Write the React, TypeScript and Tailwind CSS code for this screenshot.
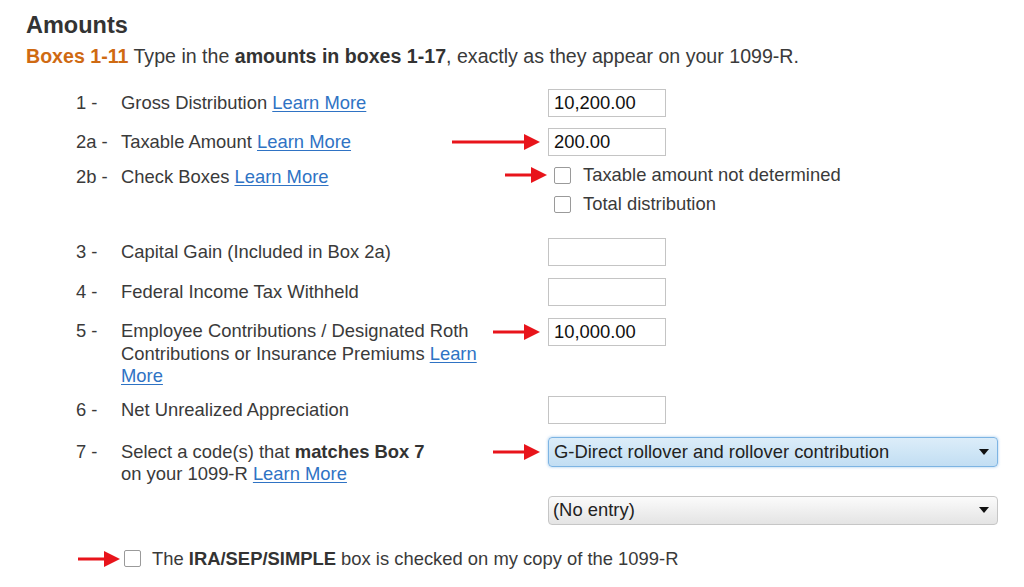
import React from 'react';

const font = { fontFamily: '"Liberation Sans", Arial, Helvetica, sans-serif' };

function Arrow({ width, className }: { width: number; className: string }) {
  return (
    <svg
      width={width}
      height={16}
      viewBox={`0 0 ${width} 16`}
      className={`absolute top-1/2 -translate-y-1/2 ${className}`}
    >
      <rect x={0} y={6.5} width={width - 14} height={3} fill="#e8141b" />
      <polygon points={`${width - 16},0 ${width},8 ${width - 16},16`} fill="#e8141b" />
    </svg>
  );
}

function LearnMore({ children = 'Learn More' }: { children?: React.ReactNode }) {
  return (
    <a href="#" className="text-[#2f73c4] underline underline-offset-2">
      {children}
    </a>
  );
}

function AmountInput({ value }: { value?: string }) {
  return (
    <div className="h-[28px] w-[118px] border border-[#c4c4c4] bg-white pl-[5px] text-[18.4px] leading-[26px] text-[#111]">
      {value}
    </div>
  );
}

function Checkbox() {
  return <span className="inline-block h-[17px] w-[17px] shrink-0 rounded-[2px] border border-[#9a9a9a] bg-white" />;
}

function Caret() {
  return (
    <svg width="10" height="6" viewBox="0 0 10 6" className="shrink-0">
      <polygon points="0,0 10,0 5,6" fill="#111" />
    </svg>
  );
}

interface RowProps {
  num?: string;
  label?: React.ReactNode;
  labelClass?: string;
  className?: string;
  children?: React.ReactNode;
}

function Row({ num, label, labelClass = 'pt-[3px] leading-[22px]', className = '', children }: RowProps) {
  return (
    <div className={`flex items-start pl-[76px] ${className}`}>
      <div className={`w-[45px] shrink-0 ${labelClass}`}>{num}</div>
      <div className={`w-[427px] shrink-0 ${labelClass}`}>
        <div className="max-w-[372px]">{label}</div>
      </div>
      <div className="relative">{children}</div>
    </div>
  );
}

export default function App() {
  return (
    <div className="min-h-[587px] w-[1024px] bg-white text-[#3a3a3a]" style={font}>
      <div className="pl-[26px] pt-[11px]">
        <h1 className="text-[23.5px] font-bold leading-[28px] text-[#333]">Amounts</h1>
        <p className="mt-[5px] text-[19.6px] leading-[24px]">
          <span className="font-bold text-[#cf6a12]">Boxes 1-11</span> Type in the{' '}
          <span className="font-bold text-[#333]">amounts in boxes 1-17</span>, exactly as they appear on your 1099-R.
        </p>
      </div>

      <div className="text-[18.4px]">
        <Row className="mt-[21px]" num="1 -" label={<>Gross Distribution <LearnMore /></>}>
          <AmountInput value="10,200.00" />
        </Row>

        <Row className="mt-[11px]" num="2a -" label={<>Taxable Amount <LearnMore /></>}>
          <Arrow width={88} className="right-[calc(100%+8px)]" />
          <AmountInput value="200.00" />
        </Row>

        <Row
          className="mt-[8px]"
          num="2b -"
          labelClass="pt-[2px] leading-[22px]"
          label={<>Check Boxes <LearnMore /></>}
        >
          <div className="flex flex-col gap-[7px] pl-[6px]">
            <label className="relative flex h-[22px] items-center gap-[12px] leading-[22px]">
              <Arrow width={42} className="right-[calc(100%+7px)]" />
              <Checkbox />
              Taxable amount not determined
            </label>
            <label className="flex h-[22px] items-center gap-[12px] leading-[22px]">
              <Checkbox />
              Total distribution
            </label>
          </div>
        </Row>

        <Row className="mt-[23px]" num="3 -" label="Capital Gain (Included in Box 2a)">
          <AmountInput />
        </Row>

        <Row className="mt-[12px]" num="4 -" label="Federal Income Tax Withheld">
          <AmountInput />
        </Row>

        <Row
          className="mt-[12px]"
          num="5 -"
          labelClass="pt-[2px] leading-[22.5px]"
          label={<>Employee Contributions / Designated Roth Contributions or Insurance Premiums <LearnMore /></>}
        >
          <Arrow width={47} className="right-[calc(100%+8px)]" />
          <AmountInput value="10,000.00" />
        </Row>

        <Row className="mt-[8px]" num="6 -" label="Net Unrealized Appreciation">
          <AmountInput />
        </Row>

        <Row
          className="mt-[13px]"
          num="7 -"
          labelClass="pt-[4px] leading-[22px]"
          label={
            <>
              Select a code(s) that <span className="font-bold text-[#333]">matches Box 7</span>
              <br />
              on your 1099-R <LearnMore />
            </>
          }
        >
          <Arrow width={47} className="right-[calc(100%+8px)]" />
          <div className="flex h-[30px] w-[450px] items-center justify-between rounded-[4px] border border-[#7db4e3] bg-gradient-to-b from-[#dcedf9] to-[#c2def3] pl-[5px] pr-[8px] text-[#222] shadow-[0_0_3px_rgba(90,160,225,0.6)]">
            <span>G-Direct rollover and rollover contribution</span>
            <Caret />
          </div>
        </Row>

        <Row className="mt-[11px]">
          <div className="flex h-[29px] w-[450px] items-center justify-between rounded-[4px] border border-[#c6c6c6] bg-gradient-to-b from-[#fbfbfb] to-[#e4e4e4] pl-[4px] pr-[8px] text-[#222]">
            <span>(No entry)</span>
            <Caret />
          </div>
        </Row>

        <div className="mt-[23px] pl-[124px]">
          <label className="relative flex h-[22px] items-center gap-[11px] leading-[22px]">
            <Arrow width={42} className="right-[calc(100%+4px)]" />
            <Checkbox />
            <span>
              The <span className="font-bold text-[#333]">IRA/SEP/SIMPLE</span> box is checked on my copy of the 1099-R
            </span>
          </label>
        </div>
      </div>
    </div>
  );
}
